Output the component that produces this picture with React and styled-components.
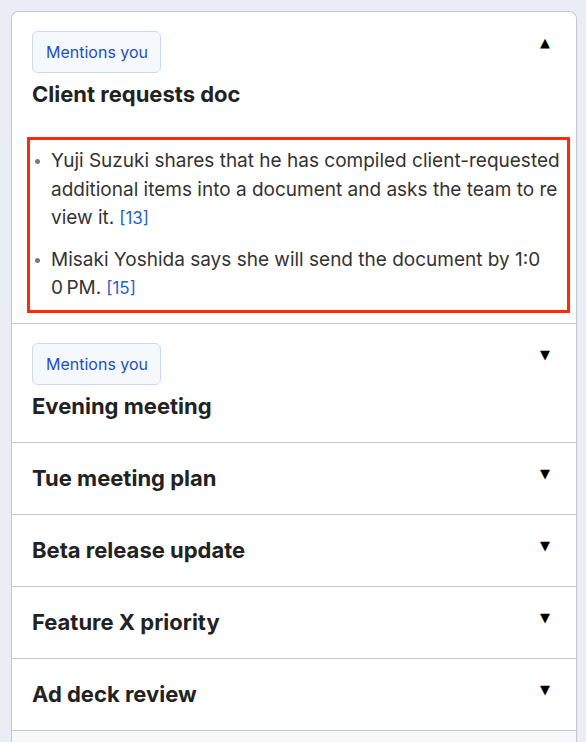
import React from "react";
import styled, { createGlobalStyle } from "styled-components";

const Global = createGlobalStyle`
  html, body { margin: 0; padding: 0; background: #e9edf5; }
  body { font-family: Inter, "Noto Sans", "Liberation Sans", sans-serif; color: #222; }
  * { box-sizing: border-box; }
`;

const Page = styled.div`
  padding: 11px 9px 0 11px;
  height: 742px;
  overflow: hidden;
`;

const Card = styled.div`
  background: #fff;
  border: 1px solid #c6c8cc;
  border-bottom: none;
  border-radius: 8px 8px 0 0;
  overflow: hidden;
`;

const Row = styled.div`
  border-top: ${(p) => (p.$first ? "none" : "1px solid #c6c8cc")};
  background: ${(p) => (p.$muted ? "#f6f8fa" : "#fff")};
  min-height: ${(p) => (p.$muted ? "40px" : "0")};
`;

const Header = styled.div`
  display: flex;
  align-items: flex-start;
  justify-content: space-between;
  padding: 19px 20px 19px 20px;
`;

const HeadMain = styled.div`
  display: flex;
  flex-direction: column;
  align-items: flex-start;
  gap: 5px;
`;

const Badge = styled.span`
  display: inline-flex;
  align-items: center;
  height: 42px;
  padding: 0 12px 0 13px;
  font-size: 16px;
  line-height: 22px;
  color: #1f4fbf;
  background: #f5f8fd;
  border: 1px solid #c9daf6;
  border-radius: 6px;
`;

const Title = styled.div`
  font-size: 22px;
  font-weight: 700;
  line-height: 33px;
  color: #222;
`;

const Caret = styled.span`
  font-size: 13px;
  line-height: 24px;
  color: #000;
  margin-right: 6px;
  font-family: "DejaVu Sans", sans-serif;
`;

const Body = styled.div`
  padding: 7px 6px 10px 15px;
`;

const Highlight = styled.div`
  border: 3px solid #ff2a0a;
  padding: 7px 4px 7px 4px;
`;

const List = styled.ul`
  list-style: none;
  margin: 0;
  padding: 0;
  display: flex;
  flex-direction: column;
  gap: 13px;
`;

const Item = styled.li`
  position: relative;
  padding-left: 17px;
  font-size: 19px;
  line-height: 28.5px;
  color: #333;
  white-space: nowrap;
  &::before {
    content: "";
    position: absolute;
    left: 1px;
    top: 12px;
    width: 5px;
    height: 5px;
    border-radius: 50%;
    background: #7a7a7a;
  }
`;

const Cite = styled.a`
  color: #2460d0;
  font-size: 17px;
  margin-left: 5px;
  text-decoration: none;
`;

const sections = [
  { title: "Client requests doc", badge: true, open: true },
  { title: "Evening meeting", badge: true },
  { title: "Tue meeting plan" },
  { title: "Beta release update" },
  { title: "Feature X priority" },
  { title: "Ad deck review" },
];

export default function App() {
  return (
    <>
      <Global />
      <Page>
        <Card>
          {sections.map((s, i) => (
            <Row key={s.title} $first={i === 0}>
              <Header>
                <HeadMain>
                  {s.badge && <Badge>Mentions you</Badge>}
                  <Title>{s.title}</Title>
                </HeadMain>
                <Caret>{s.open ? "▲" : "▼"}</Caret>
              </Header>
              {s.open && (
                <Body>
                  <Highlight>
                    <List>
                      <Item>
                        Yuji Suzuki shares that he has compiled client-requested
                        <br />
                        additional items into a document and asks the team to re
                        <br />
                        view it.
                        <Cite href="#">[13]</Cite>
                      </Item>
                      <Item>
                        Misaki Yoshida says she will send the document by 1:0
                        <br />
                        0{"\u202F"}PM.
                        <Cite href="#">[15]</Cite>
                      </Item>
                    </List>
                  </Highlight>
                </Body>
              )}
            </Row>
          ))}
          <Row $muted />
        </Card>
      </Page>
    </>
  );
}
